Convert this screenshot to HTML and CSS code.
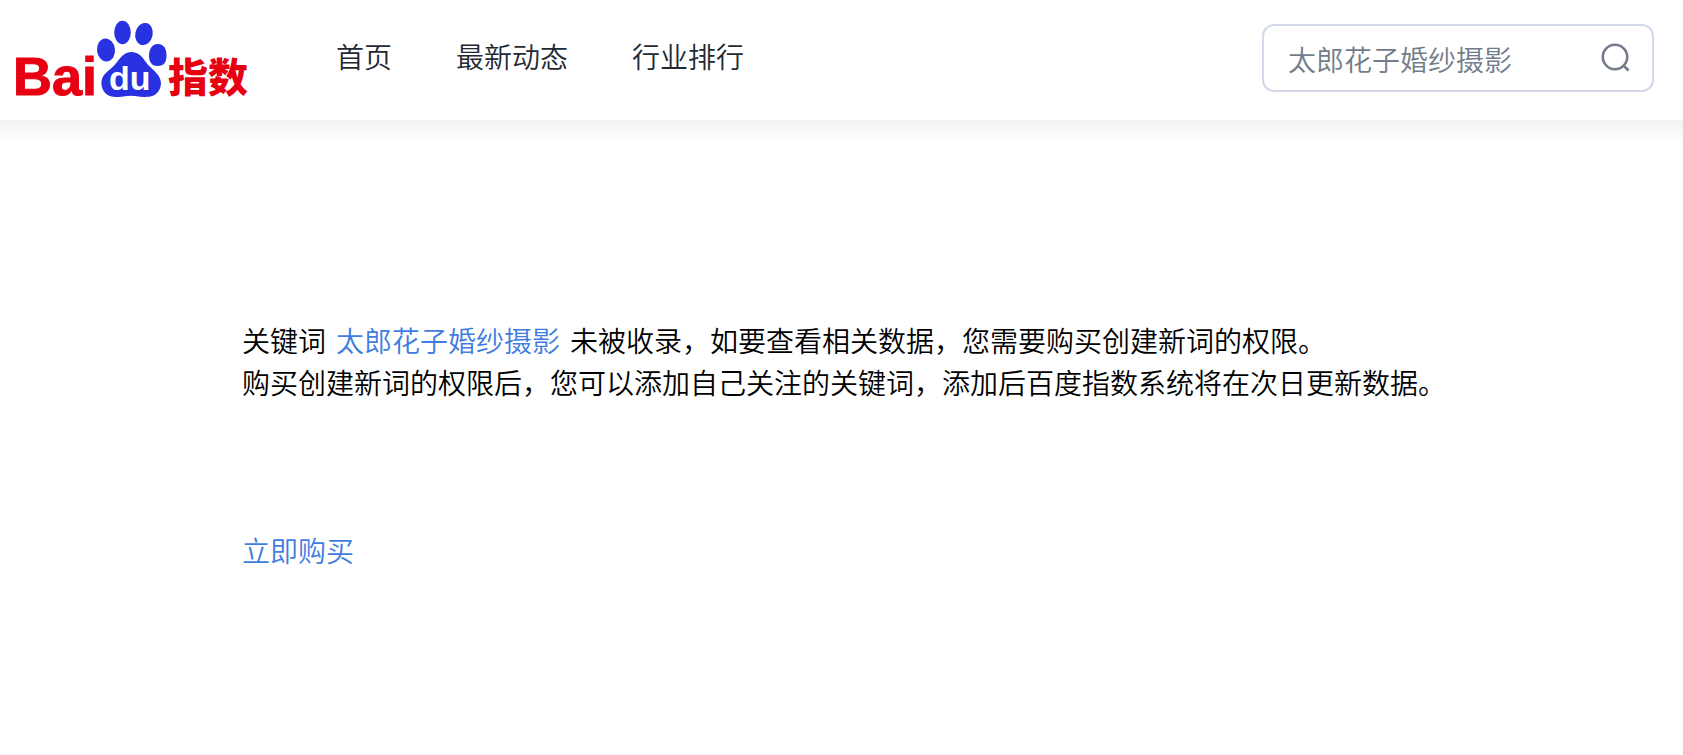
FILE: index.html
```html
<!DOCTYPE html>
<html lang="zh-CN">
<head>
    <meta charset="UTF-8">
    <meta name="viewport" content="width=device-width, initial-scale=1.0">
    <title>百度指数</title>
    <link rel="stylesheet" href="styles.css">
</head>
<body>

    <header class="header">
        <a href="#" class="logo">
            <svg width="244" height="96" viewBox="-6 0 244 96" role="img" aria-label="百度指数">
                <text class="logo-bai" x="-3" y="77">Bai</text>
                <!-- paw -->
                <g fill="#2932e1">
                    <ellipse cx="90" cy="32" rx="9" ry="11.5" transform="rotate(-6 90 32)"/>
                    <ellipse cx="106.500" cy="14.500" rx="8.300" ry="11.700"/>
                    <ellipse cx="128" cy="16" rx="8.700" ry="11.200" transform="rotate(12 128 16)"/>
                    <path d="M142 26c6 0 8.500 5 8.500 11.500S148 48 141.500 48 133 43 133 37.500 135.500 26 142 26z"/>
                    <path d="M115.500 34c6 0 10 3.500 13.500 9 3.500 5.500 9 8.500 13 14 4.500 6 3.500 13-.5 17.500-3.500 4-8.500 4.500-14 4.500-5 0-8-1.200-12.500-1.200S107.500 79 102 79c-6 0-11-.8-14-5.500-3.500-5.500-3.500-12.500.5-17 4-4.500 9-7.500 13-13S109.500 34 115.500 34z"/>
                </g>
                <text class="logo-du" x="93" y="72">du</text>
                <text class="logo-zhishu" x="152" y="74">指数</text>
            </svg>
        </a>

        <nav class="nav">
            <a href="#">首页</a>
            <a href="#">最新动态</a>
            <a href="#">行业排行</a>
        </nav>

        <form class="search">
            <input type="text" class="search-input" aria-label="搜索" value="太郎花子婚纱摄影">
            <button type="button" class="search-button" aria-label="搜索">
                <svg width="32" height="32" viewBox="0 0 32 32" fill="none" stroke="#737c8a" stroke-width="2.600">
                    <circle cx="15" cy="15" r="12.200"/>
                    <path d="M23.500 23.500l5 5"/>
                </svg>
            </button>
        </form>
    </header>

    <main class="content">
        <p>关键词<span class="keyword">太郎花子婚纱摄影</span>未被收录，如要查看相关数据，您需要购买创建新词的权限。</p>
        <p>购买创建新词的权限后，您可以添加自己关注的关键词，添加后百度指数系统将在次日更新数据。</p>
        <a href="#" class="buy">立即购买</a>
    </main>

</body>
</html>
```
FILE: styles.css
```css
body {
    margin: 0;
    font-family: "Noto Sans CJK SC", sans-serif;
    font-size: 28px;
    font-weight: 350;
    line-height: 42px;
    color: #000;
    background-color: #fff;
}

a {
    text-decoration: none;
}

.header {
    display: flex;
    align-items: flex-start;
    height: 120px;
    box-sizing: border-box;
    padding: 18px 29px 0 10px;
    background: #fff;
    box-shadow: 0 -8px 24px 16px rgba(0, 0, 0, 0.07);
}

.logo svg {
    display: block;
}

.logo-bai {
    font-family: "Liberation Sans", Arial, sans-serif;
    font-size: 54px;
    font-weight: bold;
    fill: #e60012;
    stroke: #e60012;
    stroke-width: 1px;
}

.logo-du {
    font-family: "Liberation Sans", Arial, sans-serif;
    font-size: 34px;
    font-weight: bold;
    fill: #fff;
}

.logo-zhishu {
    font-family: "Noto Sans CJK SC", sans-serif;
    font-size: 40px;
    font-weight: 900;
    fill: #e60012;
}

.nav {
    display: flex;
    gap: 64px;
    margin-left: 82px;
    padding-top: 17px;
}

.nav a {
    color: #222933;
}

.search {
    display: flex;
    align-items: center;
    width: 392px;
    height: 68px;
    box-sizing: border-box;
    margin-top: 6px;
    margin-left: auto;
    padding: 0 20px 0 24px;
    border: 2px solid #d3d9ea;
    border-radius: 12px;
}

.search-input {
    flex: 1;
    min-width: 0;
    padding: 2px 0 0;
    border: none;
    outline: none;
    background: none;
    font: inherit;
    color: #737c8a;
}

.search-button {
    padding: 0;
    border: none;
    background: none;
    cursor: pointer;
}

.search-button svg {
    display: block;
}

.content {
    padding: 199px 200px 40px 242px;
}

.content p {
    margin: 0;
}

.keyword {
    margin: 0 10px;
    color: #3f7de0;
}

.buy {
    display: inline-block;
    margin-top: 126px;
    color: #3f7de0;
}
```
